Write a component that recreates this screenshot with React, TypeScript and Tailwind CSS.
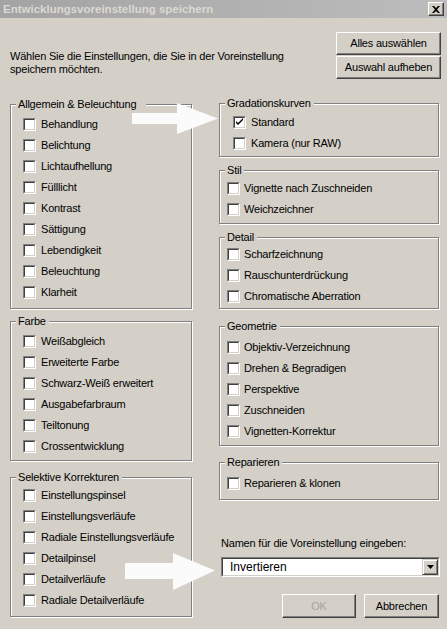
import React from "react";

const FONT = { fontFamily: '"Liberation Sans", Arial, sans-serif' };

function Checkbox({ checked }: { checked?: boolean }) {
  return (
    <span className="flex h-[13px] w-[13px] shrink-0 border border-t-[#808080] border-l-[#808080] border-b-white border-r-white">
      <span className="flex flex-1 items-center justify-center border border-t-[#404040] border-l-[#404040] border-b-[#d4d0c8] border-r-[#d4d0c8] bg-white">
        {checked && (
          <svg width="9" height="9" viewBox="0 0 9 9">
            <path d="M1 3 L1 5 L3 7 L8 2 L8 0 L3 5 Z" fill="#000" />
          </svg>
        )}
      </span>
    </span>
  );
}

function Item({
  label,
  checked,
  gap,
}: {
  label: string;
  checked?: boolean;
  gap: string;
}) {
  return (
    <div className="flex h-[21px] items-center">
      <Checkbox checked={checked} />
      <span className={gap + " text-[11px] leading-[13px] text-black whitespace-nowrap"}>{label}</span>
    </div>
  );
}

function Group({
  title,
  box,
  titleClass,
  children,
}: {
  title: string;
  box: string;
  titleClass?: string;
  children: React.ReactNode;
}) {
  return (
    <div
      className={
        "relative border border-[#808080] shadow-[inset_1px_1px_0_#fff,1px_1px_0_#fff] " + box
      }
    >
      <span
        className={
          "absolute top-[-7px] left-[5px] bg-[#d4d0c8] pl-[2px] text-[11px] leading-[13px] text-black whitespace-nowrap " +
          (titleClass ?? "pr-[3px]")
        }
      >
        {title}
      </span>
      {children}
    </div>
  );
}

function Btn({ label, w, disabled }: { label: string; w: string; disabled?: boolean }) {
  return (
    <div
      className={
        "flex items-center justify-center border border-t-white border-l-white border-b-[#404040] border-r-[#404040] bg-[#d4d0c8] shadow-[inset_-1px_-1px_0_#808080] text-[11px] leading-[13px] " +
        w +
        (disabled ? " text-[#a6a39c]" : " text-black")
      }
    >
      {label}
    </div>
  );
}

export default function App() {
  return (
    <div
      className="relative h-[629px] w-[447px] overflow-hidden bg-[#d4d0c8] tracking-[-0.2px]"
      style={FONT}
    >
      {/* title bar */}
      <div className="flex h-[18px] items-center justify-between bg-gradient-to-r from-[#a3a3a3] to-[#bdbdbd] pl-[3px] pr-[3px]">
        <span className="text-[11.5px] font-bold leading-[13px] tracking-[0px] text-[#dcd9d2]">
          Entwicklungsvoreinstellung speichern
        </span>
        <div className="flex h-[14px] w-[16px] items-center justify-center border border-t-white border-l-white border-b-[#404040] border-r-[#404040] bg-[#d4d0c8] shadow-[inset_-1px_-1px_0_#808080]">
          <svg width="8" height="7" viewBox="0 0 8 7">
            <path d="M0 0 H2 L4 2 L6 0 H8 L5 3.5 L8 7 H6 L4 5 L2 7 H0 L3 3.5 Z" fill="#000" />
          </svg>
        </div>
      </div>

      {/* header */}
      <div className="flex h-[85px] justify-between">
        <div className="pl-[10px] pt-[32px] text-[11px] leading-[13px] text-black">
          Wählen Sie die Einstellungen, die Sie in der Voreinstellung
          <br />
          speichern möchten.
        </div>
        <div className="flex flex-col gap-[1px] pr-[6px] pt-[14px]">
          <Btn label="Alles auswählen" w="h-[23px] w-[105px]" />
          <Btn label="Auswahl aufheben" w="h-[23px] w-[105px]" />
        </div>
      </div>

      {/* columns */}
      <div className="flex">
        <div className="flex w-[192px] flex-col pl-[10px] pt-[1px]">
          <Group title="Allgemein & Beleuchtung" box="h-[205px] pl-[12px] pt-[9px]" titleClass="pr-[10px]">
            {[
              "Behandlung",
              "Belichtung",
              "Lichtaufhellung",
              "Fülllicht",
              "Kontrast",
              "Sättigung",
              "Lebendigkeit",
              "Beleuchtung",
              "Klarheit",
            ].map((l) => (
              <Item key={l} label={l} gap="ml-[5px]" />
            ))}
          </Group>
          <Group title="Farbe" box="mt-[12px] h-[140px] pl-[12px] pt-[9px]">
            {[
              "Weißabgleich",
              "Erweiterte Farbe",
              "Schwarz-Weiß erweitert",
              "Ausgabefarbraum",
              "Teiltonung",
              "Crossentwicklung",
            ].map((l) => (
              <Item key={l} label={l} gap="ml-[5px]" />
            ))}
          </Group>
          <Group title="Selektive Korrekturen" box="mt-[16px] h-[140px] pl-[12px] pt-[7px]">
            {[
              "Einstellungspinsel",
              "Einstellungsverläufe",
              "Radiale Einstellungsverläufe",
              "Detailpinsel",
              "Detailverläufe",
              "Radiale Detailverläufe",
            ].map((l) => (
              <Item key={l} label={l} gap="ml-[5px]" />
            ))}
          </Group>
        </div>

        <div className="ml-[27px] flex w-[221px] flex-col">
          <Group title="Gradationskurven" box="h-[54px] w-[220px] pl-[13px] pt-[8px]">
            <Item label="Standard" checked gap="ml-[5px]" />
            <Item label="Kamera (nur RAW)" gap="ml-[5px]" />
          </Group>
          <Group title="Stil" box="mt-[13px] h-[54px] w-[220px] pl-[7px] pt-[7px]">
            <Item label="Vignette nach Zuschneiden" gap="ml-[4px]" />
            <Item label="Weichzeichner" gap="ml-[4px]" />
          </Group>
          <Group title="Detail" box="mt-[13px] h-[72px] w-[220px] pl-[7px] pt-[6px]">
            <Item label="Scharfzeichnung" gap="ml-[4px]" />
            <Item label="Rauschunterdrückung" gap="ml-[4px]" />
            <Item label="Chromatische Aberration" gap="ml-[4px]" />
          </Group>
          <Group title="Geometrie" box="mt-[17px] h-[120px] w-[220px] pl-[7px] pt-[10px]">
            {[
              "Objektiv-Verzeichnung",
              "Drehen & Begradigen",
              "Perspektive",
              "Zuschneiden",
              "Vignetten-Korrektur",
            ].map((l) => (
              <Item key={l} label={l} gap="ml-[4px]" />
            ))}
          </Group>
          <Group title="Reparieren" box="mt-[16px] h-[38px] w-[220px] pl-[7px] pt-[10px]">
            <Item label="Reparieren & klonen" gap="ml-[4px]" />
          </Group>

          <div className="ml-[2px] mt-[37px] text-[11px] leading-[13px] text-black">
            Namen für die Voreinstellung eingeben:
          </div>
          <div className="ml-[2px] mt-[7px] flex h-[20px] w-[219px] border border-t-[#808080] border-l-[#808080] border-b-white border-r-white">
            <div className="flex flex-1 items-center border border-t-[#404040] border-l-[#404040] border-b-[#d4d0c8] border-r-[#d4d0c8] bg-white">
              <span className="flex-1 pl-[7px] text-[12px] leading-[14px] tracking-[0px] text-black">Invertieren</span>
              <div className="flex h-[16px] w-[16px] items-center justify-center border border-t-[#d4d0c8] border-l-[#d4d0c8] border-b-[#404040] border-r-[#404040] bg-[#d4d0c8] shadow-[inset_1px_1px_0_#fff,inset_-1px_-1px_0_#808080]">
                <svg width="7" height="4" viewBox="0 0 7 4">
                  <path d="M0 0 H7 L3.5 4 Z" fill="#000" />
                </svg>
              </div>
            </div>
          </div>
          <div className="mt-[17px] flex justify-end gap-[8px] pr-[1px]">
            <Btn label="OK" w="h-[24px] w-[74px]" disabled />
            <Btn label="Abbrechen" w="h-[24px] w-[75px]" />
          </div>
        </div>
      </div>

      {/* annotation arrows */}
      <svg
        className="pointer-events-none absolute left-0 top-0"
        width="447"
        height="629"
        viewBox="0 0 447 629"
      >
        <path d="M132 113 H177 V103 L218 118.5 L177 134 V124 H132 Z" fill="#fbfbfb" />
        <path d="M125 563 H173 V553 L215 570.5 L173 590 V579 H125 Z" fill="#fbfbfb" />
      </svg>
    </div>
  );
}
